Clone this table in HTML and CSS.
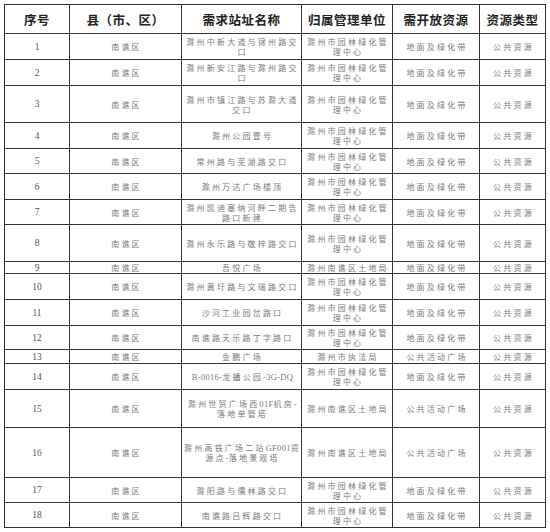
FILE: index.html
```html
<!DOCTYPE html>
<html lang="zh-CN">
<head>
<meta charset="utf-8">
<title>需求站址</title>
<link rel="stylesheet" href="styles.css">
</head>
<body>
<div class="sheet">
  <div class="h">序号</div><div class="h">县（市、区）</div><div class="h">需求站址名称</div><div class="h">归属管理单位</div><div class="h">需开放资源</div><div class="h">资源类型</div>

  <div class="n">1</div><div class="t">南谯区</div><div class="t s"><span>滁州中新大道与锦州路交<br>口</span></div><div class="t">滁州市园林绿化管理中心</div><div class="t">地面及绿化带</div><div class="t">公共资源</div>
  <div class="n">2</div><div class="t">南谯区</div><div class="t s"><span>滁州新安江路与滁州路交<br>口</span></div><div class="t">滁州市园林绿化管理中心</div><div class="t">地面及绿化带</div><div class="t">公共资源</div>
  <div class="n">3</div><div class="t">南谯区</div><div class="t s"><span>滁州市镇江路与苏滁大道<br>交口</span></div><div class="t">滁州市园林绿化管理中心</div><div class="t">地面及绿化带</div><div class="t">公共资源</div>
  <div class="n">4</div><div class="t">南谯区</div><div class="t s">滁州公园壹号</div><div class="t">滁州市园林绿化管理中心</div><div class="t">地面及绿化带</div><div class="t">公共资源</div>
  <div class="n">5</div><div class="t">南谯区</div><div class="t s">常州路与芜湖路交口</div><div class="t">滁州市园林绿化管理中心</div><div class="t">地面及绿化带</div><div class="t">公共资源</div>
  <div class="n">6</div><div class="t">南谯区</div><div class="t s">滁州万达广场楼顶</div><div class="t">滁州市园林绿化管理中心</div><div class="t">地面及绿化带</div><div class="t">公共资源</div>
  <div class="n">7</div><div class="t">南谯区</div><div class="t s"><span>滁州凯迪塞纳河畔二期告<br>路口新建</span></div><div class="t">滁州市园林绿化管理中心</div><div class="t">地面及绿化带</div><div class="t">公共资源</div>
  <div class="n">8</div><div class="t">南谯区</div><div class="t s">滁州永乐路与敬梓路交口</div><div class="t">滁州市园林绿化管理中心</div><div class="t">地面及绿化带</div><div class="t">公共资源</div>
  <div class="n">9</div><div class="t">南谯区</div><div class="t s">吾悦广场</div><div class="t">滁州南谯区土地局</div><div class="t">地面及绿化带</div><div class="t">公共资源</div>
  <div class="n">10</div><div class="t">南谯区</div><div class="t s">滁州黄圩路与文瑞路交口</div><div class="t">滁州市园林绿化管理中心</div><div class="t">地面及绿化带</div><div class="t">公共资源</div>
  <div class="n">11</div><div class="t">南谯区</div><div class="t s">沙河工业园岔路口</div><div class="t">滁州市园林绿化管理中心</div><div class="t">地面及绿化带</div><div class="t">公共资源</div>
  <div class="n">12</div><div class="t">南谯区</div><div class="t s">南谯路天乐路丁字路口</div><div class="t">滁州市园林绿化管理中心</div><div class="t">地面及绿化带</div><div class="t">公共资源</div>
  <div class="n">13</div><div class="t">南谯区</div><div class="t s">金鹏广场</div><div class="t">滁州市执法局</div><div class="t">公共活动广场</div><div class="t">公共资源</div>
  <div class="n">14</div><div class="t">南谯区</div><div class="t s"><span><span class="lat">B-0016-</span>龙蟠公园<span class="lat">-3G-DQ</span></span></div><div class="t">滁州市园林绿化管理中心</div><div class="t">地面及绿化带</div><div class="t">公共资源</div>
  <div class="n">15</div><div class="t">南谯区</div><div class="t s"><span>滁州世贸广场西<span class="lat">01F</span>机房<span class="lat">-</span><br>落地单管塔</span></div><div class="t">滁州南谯区土地局</div><div class="t">公共活动广场</div><div class="t">公共资源</div>
  <div class="n">16</div><div class="t">南谯区</div><div class="t s"><span>滁州高铁广场二站<span class="lat">GF001</span>资<br>源点<span class="lat">-</span>落地景观塔</span></div><div class="t">滁州南谯区土地局</div><div class="t">公共活动广场</div><div class="t">公共资源</div>
  <div class="n">17</div><div class="t">南谯区</div><div class="t s">滁阳路与儒林路交口</div><div class="t">滁州市园林绿化管理中心</div><div class="t">地面及绿化带</div><div class="t">公共资源</div>
  <div class="n">18</div><div class="t">南谯区</div><div class="t s">南谯路吕辉路交口</div><div class="t">滁州市园林绿化管理中心</div><div class="t">地面及绿化带</div><div class="t">公共资源</div>
</div>
</body>
</html>
```

FILE: styles.css
```css
html, body {
  margin: 0;
  padding: 0;
  background: #ffffff;
}

body {
  padding: 4px 0 0 4px;
  font-family: "Noto Sans CJK SC", "Noto Sans", sans-serif;
}

.sheet {
  display: grid;
  grid-template-columns: 64px 111px 119px 90px 86px 65px;
  grid-template-rows: 28px 25px 25px 36px 25px 24px 25px 24px 36px 11px 25px 25px 23px 13px 25px 37px 49px 24px 24px;
  gap: 1px;
  background: #333333;
  border: 1px solid #333333;
  width: max-content;
}

.sheet > div {
  background: #ffffff;
  display: flex;
  align-items: center;
  justify-content: center;
  text-align: center;
  overflow: hidden;
}

.h {
  font-size: 12.5px;
  font-weight: 700;
  letter-spacing: 0.5px;
  color: #222222;
}

.n {
  font-family: "Liberation Serif", "DejaVu Serif", serif;
  font-size: 9.5px;
  color: #555555;
  line-height: 10px;
}

.t {
  font-size: 8px;
  letter-spacing: 2.2px;
  line-height: 10px;
  color: #7a7a7a;
  padding: 1px 1px 0 3px;
}

.s {
  white-space: nowrap;
}

.lat {
  font-family: "Liberation Serif", "DejaVu Serif", serif;
  font-size: 8.5px;
  letter-spacing: 0.3px;
}
```
